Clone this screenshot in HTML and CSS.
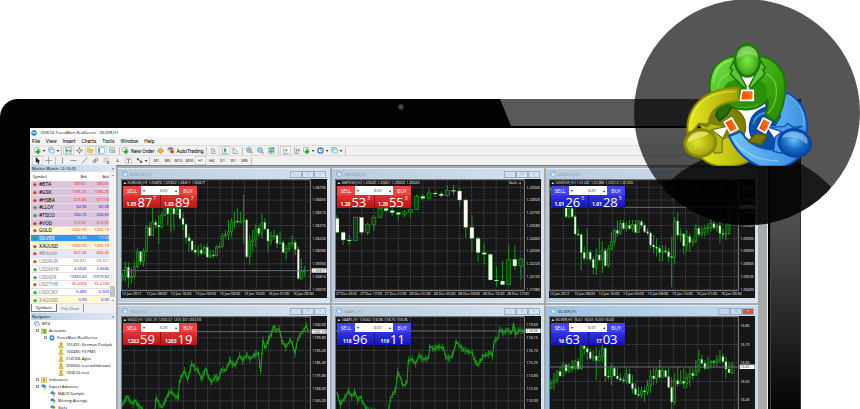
FILE: index.html
```html
<!DOCTYPE html>
<html lang="en">
<head>
<meta charset="utf-8">
<title>MetaTrader 4 terminal</title>
<link rel="stylesheet" href="styles.css">
</head>
<body>
<svg class="defs" aria-hidden="true">
  <symbol id="i-logo" viewBox="0 0 12 12"><circle cx="6" cy="6" r="5.500" fill="#1f86cf"/><path d="M2 7l2-3 2 3 2-3 2 3" fill="none" stroke="#fff" stroke-width="1.500"/></symbol>
  <symbol id="i-plus" viewBox="0 0 12 12"><rect x="1" y="1" width="8" height="8" rx="1" fill="#eef4e8" stroke="#8a9a88"/><path d="M7 4v8M3 8h8" stroke="#18b51e" stroke-width="3"/></symbol>
  <symbol id="i-win" viewBox="0 0 12 12"><rect x="1" y="1" width="8" height="6" rx="1" fill="#cfe6fa" stroke="#5794cc"/><rect x="3" y="4" width="8" height="6" rx="1" fill="#e9f4fd" stroke="#5794cc"/></symbol>
  <symbol id="i-market" viewBox="0 0 12 12"><rect x="1" y="1" width="10" height="10" fill="#d8ecf8" stroke="#79a9cc"/><path d="M2 3l4 3-4 3z" fill="#22a34a"/><path d="M6 7l4-3v6z" fill="#e46330"/></symbol>
  <symbol id="i-cross" viewBox="0 0 12 12"><circle cx="6" cy="6" r="3" fill="none" stroke="#666"/><path d="M6 0v4M6 8v4M0 6h4M8 6h4" stroke="#666"/></symbol>
  <symbol id="i-folder" viewBox="0 0 12 12"><path d="M1 2h4l1 2h4v5H1z" fill="#f6d453" stroke="#c49a1d"/><path d="M7 5l1 2 3 .3-2 1.700.5 2L7 10l-2 1z" fill="#ffe98b" stroke="#c49a1d" stroke-width=".6"/></symbol>
  <symbol id="i-term" viewBox="0 0 12 12"><rect x="1" y="1" width="10" height="10" rx="1" fill="#fff" stroke="#4d8fd0"/><path d="M2 2v8" stroke="#4d8fd0" stroke-width="3"/></symbol>
  <symbol id="i-test" viewBox="0 0 12 12"><rect x="1" y="1" width="8" height="8" fill="#dfe9f1" stroke="#8aa4b8"/><path d="M3 7V4M5 7V3M7 7V5" stroke="#5b8dba"/><circle cx="8" cy="8" r="2" fill="#ffdf70" stroke="#7f8790"/></symbol>
  <symbol id="i-diamond" viewBox="0 0 12 12"><path d="M1 6l5-4 5 4-5 4z" fill="#f4bd35" stroke="#b07612"/><path d="M1 7l5 4 5-4" fill="none" stroke="#b07612"/></symbol>
  <symbol id="i-auto" viewBox="0 0 12 12"><path d="M1 4c2-4 8-4 10 0z" fill="#4c9de0" stroke="#2c6db0"/><path d="M3 5h6l-1 5H4z" fill="#f2ca58"/><circle cx="9" cy="8" r="3" fill="#e53922"/></symbol>
  <symbol id="i-bars" viewBox="0 0 12 12"><path d="M3 1v10h7M7 3v6M5 4h2M7 7h2" fill="none" stroke="#62766a"/></symbol>
  <symbol id="i-candle" viewBox="0 0 12 12"><path d="M2 1v10h9M7 1v9" fill="none" stroke="#62766a"/><path d="M5 3h4v5H5z" fill="#32b146"/></symbol>
  <symbol id="i-line" viewBox="0 0 12 12"><path d="M2 1v10h9" fill="none" stroke="#62766a"/><path d="M3 4c4-2 3 4 7 4" fill="none" stroke="#32b146"/></symbol>
  <symbol id="i-zoom" viewBox="0 0 12 12"><path d="M7 7l4 4" stroke="#d5a92c" stroke-width="3"/><circle cx="5" cy="5" r="4" fill="#d6ecfb" stroke="#468cc8" stroke-width="1.500"/><path d="M3 5h4M5 3v4" stroke="#2b74b8"/></symbol>
  <symbol id="i-zoomout" viewBox="0 0 12 12"><path d="M7 7l4 4" stroke="#d5a92c" stroke-width="3"/><circle cx="5" cy="5" r="4" fill="#d6ecfb" stroke="#468cc8" stroke-width="1.500"/><path d="M3 5h4" stroke="#2b74b8"/></symbol>
  <symbol id="i-tile" viewBox="0 0 12 12"><path d="M1 1h5v5H1zM6 6h5v5H6z" fill="#58b344"/><path d="M6 1h5v5H6zM1 6h5v5H1z" fill="#3f7fc8"/><path d="M2 4h3M7 4h3M2 9h3M7 9h3" stroke="#fff" stroke-width="1.500"/></symbol>
  <symbol id="i-scroll" viewBox="0 0 12 12"><path d="M3 1v10h8" fill="none" stroke="#62766a"/><path d="M6 3l4 2.500L6 8z" fill="#32b146"/></symbol>
  <symbol id="i-shift" viewBox="0 0 12 12"><path d="M3 1v10h8M6 2v8" fill="none" stroke="#62766a"/><path d="M11 3L7 5.500 11 8z" fill="#d8552f"/></symbol>
  <symbol id="i-clock" viewBox="0 0 12 12"><circle cx="6" cy="6" r="4.500" fill="#fff" stroke="#2c73bd" stroke-width="2"/><path d="M6 3v3l2 1" fill="none" stroke="#444"/></symbol>
  <symbol id="i-arrow" viewBox="0 0 12 12"><path d="M3 0v10l2.500-2L7 12l2-1-1.500-3.500H11z" fill="#222"/></symbol>
  <symbol id="i-plusline" viewBox="0 0 12 12"><path d="M6 0v12M0 6h12" stroke="#777"/></symbol>
  <symbol id="i-vline" viewBox="0 0 12 12"><path d="M6 1v10" stroke="#555"/></symbol>
  <symbol id="i-hline" viewBox="0 0 12 12"><path d="M1 6h10" stroke="#555"/></symbol>
  <symbol id="i-trend" viewBox="0 0 12 12"><path d="M1 11L11 1" stroke="#555"/></symbol>
  <symbol id="i-channel" viewBox="0 0 12 12"><path d="M1 8l8-7M3 11l8-7M3 6v4M6 4v5M9 3v3" stroke="#555"/></symbol>
  <symbol id="i-fibo" viewBox="0 0 12 12"><path d="M1 2h9M1 5h9M1 8h6" stroke="#777" stroke-dasharray="2 1"/><path d="M8 8h3M8 11h3M8 7v5" stroke="#444"/></symbol>
  <symbol id="i-label" viewBox="0 0 12 12"><rect x="1" y="1" width="10" height="10" fill="none" stroke="#888" stroke-dasharray="1 1"/><path d="M3 4h6M6 4v6" stroke="#444"/></symbol>
  <symbol id="i-arrows" viewBox="0 0 12 12"><path d="M1 2l5 1-3 3zM11 10L6 9l3-3z" fill="#333"/><path d="M3 4l6 4" stroke="#333"/></symbol>
  <symbol id="i-user" viewBox="0 0 12 12"><circle cx="6" cy="3" r="2.500" fill="#f6c833" stroke="#a97a0d"/><path d="M2 11c0-7 8-7 8 0z" fill="#f6c833" stroke="#a97a0d"/></symbol>
  <symbol id="i-server" viewBox="0 0 12 12"><path d="M2 2l4-1 4 1v7l-4 2-4-2z" fill="#3e9be5" stroke="#1e6fb6"/><path d="M4 4h4v3H4z" fill="#c7e4fa"/></symbol>
  <symbol id="i-accounts" viewBox="0 0 12 12"><path d="M0 2h5l1 1h5v8H0z" fill="#f1d15c" stroke="#b7951f"/><circle cx="7" cy="4" r="2.500" fill="#51ad38"/><path d="M4 10c0-5 6-5 6 0z" fill="#51ad38"/></symbol>
  <symbol id="i-func" viewBox="0 0 12 12"><rect x="1" y="1" width="10" height="10" fill="#fbe280" stroke="#c4a546"/><path d="M8 3c-3-1-2 3-3 7M4 6h4" fill="none" stroke="#6b5a1a"/></symbol>
  <symbol id="i-hat" viewBox="0 0 12 12"><path d="M1 5C1 0 8 0 9 4l2 2-5 1z" fill="#3e95d8" stroke="#246ca6" stroke-width=".6"/><path d="M5 7l5-1v3l-3 3z" fill="#edbe42"/></symbol>
</svg>

<main class="stage">
  <section class="laptop">
    <div class="bezel-top"><span class="camera"></span><span class="glare"></span></div>
    <div class="bezel-left"></div>
    <div class="screen">
      <header class="titlebar"><svg class="ico"><use href="#i-logo"/></svg><span>160674: ForexMart-RealServer - SILVER,H1</span></header>
      <nav class="menu">
        <button>File</button><button>View</button><button>Insert</button><button>Charts</button><button>Tools</button><button>Window</button><button>Help</button>
      </nav>
      <div class="toolbar main-tools" id="tools"></div>
      <div class="toolbar line-tools" id="lines"></div>
      <div class="body">
        <aside class="side">
          <h2>Market Watch: 12:15:20<span>×</span></h2>
          <div class="watch">
            <table>
              <thead><tr><th>Symbol</th><th>Bid</th><th>Ask</th></tr></thead>
              <tbody id="quotes"></tbody>
            </table>
            <div class="scroll"><span>⌃</span><i></i><span>⌄</span></div>
          </div>
          <div class="tabs"><button class="on">Symbols</button><button>Tick Chart</button></div>
          <h2>Navigator<span>×</span></h2>
          <ul class="tree" id="tree"></ul>
        </aside>
        <div class="workspace" id="charts"></div>
      </div>
    </div>
    <div class="bezel-right"></div>
  </section>

  <svg class="badge" viewBox="12 0 678 676" role="img" aria-label="MetaTrader 4">
    <defs>
      <clipPath id="disc"><circle cx="351" cy="337" r="339"/></clipPath>
      <clipPath id="flat"><path d="M100 100h500v397H100z"/></clipPath>
      <radialGradient id="gh" cx=".5" cy=".5" r=".55"><stop offset="0" stop-color="#7fee45"/><stop offset="1" stop-color="#329713"/></radialGradient>
      <linearGradient id="gb" x2="1" y2=".7"><stop offset="0" stop-color="#7be44e"/><stop offset=".5" stop-color="#45b81b"/><stop offset="1" stop-color="#2f9200"/></linearGradient>
      <radialGradient id="yh" cx=".4" cy=".45" r=".6"><stop offset="0" stop-color="#e4e42c"/><stop offset="1" stop-color="#9a9b06"/></radialGradient>
      <linearGradient id="yb"><stop offset="0" stop-color="#e8ea20"/><stop offset="1" stop-color="#a3a405"/></linearGradient>
      <radialGradient id="bh" cx=".45" cy=".4" r=".6"><stop offset="0" stop-color="#6cc2fb"/><stop offset=".6" stop-color="#1467bd"/><stop offset="1" stop-color="#0a4aa5"/></radialGradient>
      <linearGradient id="bb"><stop offset="0" stop-color="#70c4fa"/><stop offset="1" stop-color="#3a8fe0"/></linearGradient>
      <linearGradient id="card" x2="1"><stop offset="0" stop-color="#ff3d00"/><stop offset="1" stop-color="#ff7d2e"/></linearGradient>
    </defs>
    <circle cx="351" cy="337" r="339" fill="#000" fill-opacity=".665"/>
    <circle cx="352" cy="791" r="340" fill="#000" fill-opacity=".69" clip-path="url(#disc)"/>
    <g clip-path="url(#flat)" stroke-width="6" stroke-linejoin="round">
      <path d="M296 310L405 310 430 400 355 430 285 390z" fill="#fff"/>
      <circle cx="286" cy="380" r="60" fill="#7e8104" stroke="#737500"/>
      <path d="M205 462C240 512 325 510 382 468L340 422 310 402 250 430z" fill="url(#yb)" stroke="#8c8e00"/>
      <circle cx="420" cy="383" r="61" fill="#0d4fa4" stroke="#0648b2"/>
      <path d="M370 372C374 352 390 340 410 337" fill="none" stroke="#5ab1f2" stroke-width="6" opacity=".7"/>
      <path d="M380 263L420 266C490 272 532 315 532 385L524 415 430 385 450 350 440 320 388 302z" fill="url(#bb)" stroke="#0951bd"/>
      <path d="M474 284C512 308 523 340 522 378" fill="none" stroke="#a5daff" stroke-width="3" opacity=".6"/>
      <path d="M258 346L278 298 309 315 290 345 269 362z" fill="#276e0a" stroke="#165200"/>
      <path d="M239 272C236 208 265 173 318 168L388 168C441 175 468 218 466 265 465 304 457 332 438 364L406 345C414 325 416 311 412 298 385 337 318 337 286 306L262 330z" fill="url(#gb)" stroke="#1e7605"/>
      <path d="M286 305C318 326 370 326 411 297L411 264C405 248 390 240 375 238L330 238C304 240 286 248 282 264z" fill="#2b9208"/>
      <path d="M264 263C268 234 291 218 313 219M391 218C429 222 444 249 438 291 434 317 425 331 413 340" fill="none" stroke="#8ce876" stroke-width="4" opacity=".6"/>
      <path d="M250 248C253 209 275 187 302 181" fill="none" stroke="#a6f284" stroke-width="4" opacity=".7"/>
      <path d="M319 220L388 220 354 270z" fill="#fff" stroke="none"/>
      <path d="M312 182L300 205 308 208 301 222 343 264 349 260 322 210zM392 182L407 205 398 208 405 222 364 264 357 260 383 210z" fill="#5ac839" stroke="#1e6d09" stroke-width="4"/>
      <path d="M173 400C165 325 222 262 325 263L325 302C273 307 240 324 235 372L207 371 191 391z" fill="url(#yb)" stroke="#898a00"/>
      <path d="M185 362C190 310 235 276 315 275" fill="none" stroke="#f7f760" stroke-width="4" opacity=".5"/>
      <path d="M244 378L294 379 270 428z" fill="#fff"/>
      <path d="M208 371L230 380 240 370 288 380 244 389 277 414 276 457 255 460 235 430z" fill="#b8b917" stroke="#787900" stroke-width="4"/>
      <path d="M297 408L333 395C360 438 402 454 455 448L507 470C480 503 430 512 383 496 344 479 318 454 297 408z" fill="url(#bb)" stroke="#0951bd"/>
      <path d="M309 417C335 454 380 482 445 483" fill="none" stroke="#a2dafd" stroke-width="4" opacity=".6"/>
      <path d="M355 425L378 400 411 406 394 434z" fill="#777900" stroke="#585a00" stroke-width="5"/>
      <path d="M410 380L463 378 445 430z" fill="#fff"/>
      <path d="M416 382L465 379 472 370 490 382 515 379 470 400 456 460 430 454 436 411 455 395z" fill="#4b9ee5" stroke="#0b50b0" stroke-width="4"/>
      <ellipse cx="352" cy="181" rx="37" ry="48" fill="url(#gh)" stroke="#1f7808" stroke-width="8"/>
      <path d="M319 177C320 147 338 138 354 139 372 141 385 156 384 173 365 158 344 160 319 177z" fill="#baf4a0" opacity=".45"/>
      <ellipse cx="211" cy="429" rx="47" ry="40" fill="url(#yh)" stroke="#878900" stroke-width="8" transform="rotate(-12 211 429)"/>
      <path d="M173 428C174 403 206 391 230 397 248 406 205 411 173 428z" fill="#fafa9c" opacity=".6"/>
      <ellipse cx="494" cy="429" rx="48" ry="40" fill="url(#bh)" stroke="#0745ab" stroke-width="8" transform="rotate(14 494 429)"/>
      <path d="M456 415C462 393 492 388 519 402 536 415 535 429 529 432 505 410 482 407 456 415z" fill="#b5e3ff" opacity=".5"/>
      <path d="M336 271H370V301H331z" fill="url(#card)" stroke="#fff" stroke-width="5"/>
      <path d="M283 367L305 354 324 386 301 399z" fill="url(#card)" stroke="#fff" stroke-width="5"/>
      <path d="M400 354L423 366 406 399 384 386z" fill="url(#card)" stroke="#fff" stroke-width="5"/>
    </g>
  </svg>
</main>
<script src="app.js"></script>
</body>
</html>
```
FILE: styles.css
```css
* { box-sizing: border-box; }
body { margin: 0; background: #fff; font-family: "Open Sans", "Noto Sans", sans-serif; font-size: 4px; color: #000; }
button, input { font: inherit; color: inherit; margin: 0; padding: 0; border: 0; background: none; }
.defs { display: none; }
.stage { position: relative; height: 100vh; overflow: hidden; padding: 99px 59px 0 0; }
.laptop { display: grid; grid-template-columns: 30px minmax(0, 1fr) 33px; grid-template-rows: 29px auto; background: #020202; border-radius: 18px 0 0 0; overflow: hidden; }
.bezel-top { grid-column: 1 / -1; position: relative; display: flex; padding-bottom: 2px; }
.camera { position: absolute; left: 50%; top: 5px; width: 6px; height: 6px; margin-left: -3px; border-radius: 50%; background: radial-gradient(#55556a, #17171c); }
.glare { width: 301px; margin-left: auto; background: #595959; clip-path: polygon(0 0, 100% 0, 100% 100%, 11px 100%); }
.bezel-right { margin-left: 2px; border-left: 1px solid #444; border-right: 1px solid #333; background: linear-gradient(#585858, #4d4d4d 100px, #030303 285px); }
.screen { background: #f0f0f0; min-width: 0; }
.ico { width: 6px; height: 6px; flex: none; display: block; }

.titlebar { display: flex; align-items: center; gap: 3px; height: 9px; padding-left: 1px; background: #fff; }
.menu { display: flex; gap: 6px; height: 8px; padding-left: 2px; align-items: center; background: #f6f6f6; font-family: Roboto, sans-serif; font-size: 5px; line-height: 6px; }
.toolbar { display: flex; align-items: center; height: 10px; border-top: 1px solid #dcdcdc; font-family: Roboto, sans-serif; font-size: 5px; line-height: 6px; padding-left: 2px; }
.toolbar button { display: flex; align-items: center; justify-content: center; gap: 2px; width: 11px; height: 9px; flex: none; }
.toolbar button.wide { width: 14px; }
.toolbar button.text { width: auto; padding: 0 1px; }
.toolbar button.on { background: #fafafa; box-shadow: inset 0 0 0 1px #d4d4d4; }
.toolbar .ico { width: 7px; height: 7px; }
.toolbar .caret::after { content: "▾"; font-size: 4px; }
.toolbar hr { width: 1px; height: 8px; margin: 0 1px; border: 0; background: #c2c2c2; flex: none; }
.line-tools .tf { font-size: 4px; color: #333; }

.body { display: grid; grid-template-columns: 86px minmax(0, 1fr); }
.side { background: #f0f0f0; min-width: 0; padding-left: 1px; overflow: hidden; }
.side h2 { display: flex; justify-content: space-between; height: 7px; margin: 0; padding: 0 2px 0 1px; font-size: 4px; line-height: 7px; font-weight: 400; background: linear-gradient(90deg, #b9cde0, #dde8f3); }
.watch { display: flex; background: #fff; }
.watch table { width: 78px; height: 132px; border-collapse: collapse; table-layout: fixed; line-height: 6px; }
.watch th { font-weight: 400; height: 9px; padding: 0; text-align: right; background: #fff; }
.watch th:first-child { text-align: left; padding-left: 2px; width: 33px; }
.watch td { padding: 0; text-align: right; border-bottom: 1px solid #e6e0e6; color: #1010e8; }
.watch td:first-child { color: #000; text-align: left; white-space: nowrap; overflow: hidden; font-family: Roboto, sans-serif; font-size: 5px; }
.watch td:first-child::before { content: "◆"; color: #21a73a; padding: 0 2px; }
.watch .down td { color: #f81414; }
.watch .down td:first-child { color: #000; }
.watch .down td:first-child::before { color: #d83f18; }
.watch .pink { background: #dcc4dc; }
.watch .cream { background: #fff9d4; }
.watch .lilac { background: #e7e5f8; }
.watch tr.sel { background: #3095f3; }
.watch tr.sel td, .watch tr.sel td:first-child { color: #fff; }
.watch tr.dim td:first-child { color: #8c8c8c; }
.scroll { display: flex; flex-direction: column; align-items: center; flex: 1; padding: 2px 0; background: #f2f2f2; }
.scroll i { width: 5px; height: 11px; margin-top: auto; background: #c4c4c4; }
.tabs { display: flex; height: 9px; align-items: start; }
.tabs button { padding: 0 4px; height: 8px; line-height: 7px; border-right: 1px solid #999; color: #555; }
.tabs .on { background: #fff; color: #000; border: 1px solid #777; border-top: 0; }
.tree { list-style: none; margin: 0; padding: 0; background: #fff; }
.tree li { display: flex; align-items: center; gap: 2px; height: 7px; line-height: 7px; white-space: nowrap; padding-left: 3px; }
.tree .d1 { padding-left: 5px; }
.tree .d2 { padding-left: 13px; }
.tree .d3 { padding-left: 27px; }
.tree .leaf { padding-left: 19px; }
.tree b { width: 3px; height: 3px; border: 1px solid #999; }

.workspace { display: grid; grid-template-columns: repeat(3, minmax(0, 1fr)); gap: 2px; align-content: start; padding: 2px 9px 0 2px; background: #a9a9a9; border-top: 1px solid #808080; border-right: 1px solid #eee; }
.win { position: relative; padding: 0 3px 4px; background: linear-gradient(90deg, #b9cbdd, #d6e3f0); border: 1px solid #e3edf6; border-width: 1px 0; }
.win > header { display: flex; align-items: center; gap: 2px; height: 10px; padding: 0 1px; color: #8493a2; }
.win > header span { flex: 1; }
.win nav { display: flex; height: 7px; }
.win nav button { width: 12px; border: 1px solid #a0aebd; font-size: 4px; line-height: 4px; color: #8796a6; }
.win.active { background: linear-gradient(90deg, #9fc3e4, #c5dcf0); }
.win.active > header { color: #222; }
.win.active nav button:last-child { background: #d25740; color: #fff; }
.plot { position: relative; }
.plot > svg { display: block; width: 100%; height: auto; background: #161616; font-family: "Open Sans", sans-serif; font-size: 11px; }
.plot text { fill: #f4f4f4; }
.trade { position: absolute; left: 2px; top: 7px; width: 74px; display: grid; grid-template-columns: 18px 1fr 18px; background: #fff; color: #fff; }
.trade > button { height: 9px; font-size: 5px; line-height: 8px; background: #ee4444; }
.trade label { display: flex; align-items: center; justify-content: space-between; margin: 1px; padding: 0 1px; color: #333; font-size: 4px; line-height: 6px; }
.trade input { width: 16px; height: 6px; text-align: right; color: #111; }
.quote { grid-column: 1 / -1; display: grid; grid-template-columns: 1fr 1fr; gap: 1px; background: #811; }
.quote button { height: 13px; display: flex; align-items: center; justify-content: center; gap: 1px; background: linear-gradient(#e03434, #b81616); line-height: 12px; white-space: nowrap; }
.quote small { font-size: 5px; font-weight: 700; line-height: 6px; align-self: end; padding-bottom: 1px; }
.quote strong { font-size: 13px; font-weight: 400; }
.quote sup { font-size: 5px; line-height: 6px; align-self: start; }
.blue .trade > button { background: #4444ee; }
.blue .quote { background: #118; }
.blue .quote button { background: linear-gradient(#3434e0, #1414b4); }

.badge { position: absolute; top: 0; right: 0; width: 226px; height: auto; }
```
FILE: app.js
```js
const el = id => document.getElementById(id);
const icon = name => `<svg class="ico"><use href="#i-${name}"/></svg>`;

// Toolbars: "|" is a separator, "!" marks a pressed button, "+" a drop-down.
function toolbar(list) {
  return list.map(item => {
    if (item === '|') return '<hr>';
    const on = item.includes('!') ? 'on ' : '';
    const wide = item.includes('+') ? 'wide caret ' : '';
    const [name, label] = item.replace(/[!+]/g, '').split(':');
    if (!name) return `<button class="tf ${on}">${label}</button>`;
    return `<button class="${on}${wide}${label ? 'text' : ''}">${icon(name)}${label || ''}</button>`;
  }).join('');
}
el('tools').innerHTML = toolbar(['plus+', 'win+', '|', 'market!', 'cross', 'folder!', 'term!', 'test', '|', 'plus:New Order', 'diamond', 'auto:AutoTrading', '|', 'bars', 'candle!', 'line', '|', 'zoom', 'zoomout', 'tile', '|', 'scroll!', 'shift', 'plus+', 'clock+', 'win+', '|']);
el('lines').innerHTML = toolbar(['arrow!', 'plusline', '|', 'vline', 'hline', 'trend', 'channel', 'fibo', ':A', 'label', 'arrows+', '|', ':M1', ':M5', ':M15', ':M30', '!:H1', ':H4', ':D1', ':W1', ':MN', '|']);

const quotes = [
  ['#BTA', '389.61', '389.81', 'down pink'], ['#GSK', '1595.25', '1596.25', 'down pink'],
  ['#HSBA', '676.83', '677.03', 'down pink'], ['#LLOY', '64.96', '65.06', 'pink'],
  ['#TSCO', '204.25', '204.65', 'pink'], ['#VOD', '212.81', '213.01', 'down pink'],
  ['GOLD', '1202.59', '1203.19', 'down cream'], ['SILVER', '16.63', '17.03', 'sel'],
  ['XAUUSD', '1202.59', '1203.19', 'down cream'], ['#Bitcoin', '827.46', '834.46', 'down lilac dim'],
  ['USDRUR', '59.321', '59.721', 'down dim'], ['USDMYR', '4.4636', '4.4686', 'dim'],
  ['USDIDR', '13363.82', '13373.82', 'dim'], ['USDTHB', '35.4068', '35.4168', 'down dim'],
  ['USDCNY', '6.889', '6.909', 'dim'], ['XAGUSD', '0.00', '0.00', 'cream dim']
];
el('quotes').innerHTML = quotes.map(q => `<tr class="${q[3]}"><td>${q[0]}</td><td>${q[1]}</td><td>${q[2]}</td></tr>`).join('');

const tree = [
  ['', 'win', 'MT4'], ['d1 x', 'accounts', 'Accounts'], ['d2 x', 'server', 'ForexMart-RealServer'],
  ['d3', 'user', '101491: German Pavlyak'], ['d3', 'user', '104485: FX PM3'], ['d3', 'user', '214168: Agus'],
  ['d3', 'user', '203064: test withdrawal'], ['d3', 'user', '160674: test'], ['d1 x', 'func', 'Indicators'],
  ['d1 x', 'hat', 'Expert Advisors'], ['leaf', 'hat', 'MACD Sample'], ['leaf', 'hat', 'Moving Average'], ['leaf', 'hat', 'Stels']
];
el('tree').innerHTML = tree.map(([c, i, t]) => `<li class="${c}">${c.includes('x') ? '<b></b>' : ''}${icon(i)}${t}</li>`).join('');

// Candles: [close, high, low]; each opens at the previous close.
const eur = [[335,325,346],[307,290,350],[338,293,368],[335,310,355],[305,290,340],[260,250,310],[290,258,300],[258,250,305],[188,180,262],[212,170,215],[172,125,212],[180,165,190],[186,150,237],[150,140,190],[128,120,155],[147,120,180],[130,120,203],[147,125,195],[132,125,150],[160,128,165],[178,145,195],[218,175,235],[228,205,260],[255,222,260],[262,240,268],[255,240,275],[265,235,270],[247,240,268],[276,235,280],[270,255,280],[272,255,280],[245,240,275],[244,235,250],[212,205,250],[208,195,220],[200,165,225],[172,160,215],[168,140,190],[170,130,175],[170,140,175],[165,90,235],[275,160,280],[230,210,300],[225,195,260],[190,175,245],[205,180,215],[172,145,220],[192,160,197],[228,200,262],[212,200,240],[212,195,225],[235,205,250],[233,200,240],[262,225,265],[250,240,285],[235,230,260],[233,210,245],[253,225,270],[340,245,345],[318,280,345],[318,303,335]];
const gbp = [[202,150,205],[225,200,240],[226,210,240],[157,155,228],[202,155,210],[178,172,210],[157,150,197],[130,120,160],[137,130,140],[143,130,152],[148,140,163],[141,135,157],[133,130,158],[94,88,135],[100,85,105],[84,70,103],[87,78,95],[92,80,97],[76,60,95],[78,60,90],[105,70,125],[187,100,218],[220,150,260],[263,215,290],[268,235,298],[345,265,345],[348,305,365],[359,288,360],[283,238,360],[303,240,315],[283,280,343]];
const chf = [[72,68,95],[90,70,100],[80,70,100],[100,80,120],[127,90,130],[155,110,160],[130,110,160],[155,128,160],[207,150,210],[209,190,215],[263,205,317],[280,245,290],[262,190,285],[283,255,290],[308,275,328],[270,250,330],[285,220,290],[257,230,325],[302,250,305],[252,240,308],[230,200,255],[196,190,240],[205,165,215],[174,165,210],[190,165,195],[181,170,200],[190,165,195],[178,165,200],[202,165,205],[170,165,205],[181,165,190],[200,175,205],[204,190,210],[240,200,250],[246,210,265],[250,220,275],[262,240,290],[258,240,290],[261,240,265],[275,250,290],[277,215,367],[168,155,295],[210,143,215],[207,190,230],[243,205,267],[215,195,260],[232,205,260],[228,220,245],[190,178,235],[208,180,215],[202,185,215],[190,180,215],[188,175,210],[176,165,200],[188,170,195],[182,175,200],[205,170,235],[207,190,220],[205,175,225],[130,105,210],[122,100,135]];
const slv = [[250,240,268],[240,220,270],[215,210,250],[228,200,230],[195,185,220],[213,190,220],[198,190,220],[205,180,218],[184,180,210],[206,175,210],[138,135,210],[146,130,165],[156,140,180],[175,145,180],[168,150,185],[182,140,240],[170,150,185],[145,130,185],[228,140,245],[231,205,240],[205,190,255],[228,200,230],[236,205,240],[240,220,245],[243,230,250],[222,205,250],[250,205,252],[266,225,280],[283,250,285],[285,260,292],[272,260,295],[276,262,305],[257,240,285],[228,210,280],[236,205,255],[210,205,250],[232,180,235],[212,205,225],[230,210,235],[262,205,265],[306,232,327],[242,220,315],[252,200,260],[244,210,250],[250,205,265],[232,220,265],[220,200,260],[227,205,240],[212,180,222],[178,150,220],[190,165,195],[205,180,210],[188,170,200],[184,180,205],[187,180,200],[180,165,200],[170,150,190],[185,160,190],[207,170,235],[218,185,220],[195,185,222]];
// Bar charts: turning points [x, y] of the price.
const gold = [[20,318],[30,300],[38,290],[46,306],[54,312],[60,300],[70,318],[78,322],[88,340],[118,345],[124,292],[132,312],[140,322],[150,305],[160,280],[170,275],[180,290],[190,292],[193,245],[208,212],[218,240],[230,190],[240,205],[250,212],[260,238],[272,205],[280,230],[290,248],[300,230],[310,238],[320,208],[332,212],[345,180],[352,192],[362,195],[374,165],[382,182],[396,164],[404,178],[418,165],[430,160],[437,215],[444,120],[450,145],[460,120],[470,100],[476,78],[484,92],[492,85],[500,120],[512,142],[526,120],[532,132],[540,160],[548,118],[560,98],[568,88],[574,75],[580,98]];
const aapl = [[18,278],[28,315],[36,300],[44,290],[52,272],[62,290],[72,276],[80,302],[88,290],[98,312],[108,330],[170,345],[180,290],[194,270],[200,215],[208,232],[216,258],[228,248],[232,182],[244,178],[254,192],[264,165],[276,178],[292,175],[297,138],[308,148],[322,140],[338,144],[344,172],[356,175],[366,162],[376,125],[388,140],[398,150],[412,155],[424,158],[428,175],[440,195],[450,180],[456,168],[468,165],[480,158],[484,170],[490,122],[502,115],[506,88],[516,98],[530,90],[542,100],[548,72],[554,105],[564,90],[582,95]];

function candles(data, start, first, step, width) {
  let open = start;
  return data.map(([close, high, low], i) => {
    const x = first + i * step;
    const top = Math.min(open, close);
    const h = Math.max(3, Math.abs(close - open));
    const down = close > open;
    open = close;
    return `<path d="M${x} ${high}V${low}" stroke="#189a18" stroke-width="3"/>` +
      `<rect x="${x - width / 2}" y="${top}" width="${width}" height="${h}" fill="${down ? '#f6fff4' : '#0c420c'}" stroke="#18a018" stroke-width="${down ? 1 : 2}"/>`;
  }).join('');
}
function bars(points) {
  let d = '', n = 0;
  for (let i = 1; i < points.length; i++) {
    const [x0, y0] = points[i - 1], [x1, y1] = points[i];
    for (let x = x0; x < x1; x += 4) {
      const y = y0 + (y1 - y0) * (x - x0) / (x1 - x0);
      const swing = 3 + (n++ * 7 % 11);
      d += `M${x} ${y - swing}V${y + swing}`;
    }
  }
  return `<path d="M${points.join('L')}" fill="none" stroke="#18a818" stroke-width="3"/><path d="${d}" stroke="#18b818" stroke-width="2"/>`;
}

const charts = [
  { name: 'EURUSD,H1', info: '1.05876 1.05932 1.05811 1.05877', ox: 18, oy: 42, gx: 58, gy: 67, dy: 38.25, draw: candles(eur, 345, 22, 9.1, 6),
    prices: ['1.06795', '1.06655', '1.06515', '1.06375', '1.06230', '1.06090', '1.05950', '1.05810', '1.05670'], now: [317, '1.05877'],
    times: ['12 Jan 2017', '12 Jan 08:00', '12 Jan 16:00', '13 Jan 00:00', '13 Jan 08:00', '13 Jan 16:00', '16 Jan 01:00', '16 Jan 09:00'], sell: ['1.05', '87', '7'], buy: ['1.05', '89', '7'] },
  { name: 'GBPUSD,H1', info: '1.20625 1.20631 1.20603 1.20620', note: 'Stels ☺', ox: 12, oy: 42, gx: 55, gy: 67, dy: 38.25, draw: candles(gbp, 160, 18, 18.4, 12),
    prices: ['1.22940', '1.22820', '1.22700', '1.22580', '1.22460', '1.22340', '1.22220', '1.22100', '1.21980'],
    times: ['27 Dec 2016', '27 Dec 17:00', '27 Dec 21:00', '28 Dec 01:00', '28 Dec 05:00', '28 Dec 09:00', '28 Dec 13:00', '28 Dec 17:00'], sell: ['1.20', '53', '3'], buy: ['1.20', '55', '3'] },
  { name: 'USDCHF,H1', info: '1.01247 1.01285 1.01212 1.01265', blue: 1, ox: 12, oy: 42, gx: 55, gy: 67, dy: 38.25, draw: candles(chf, 70, 18, 9.05, 6),
    prices: ['1.01470', '1.01335', '1.01200', '1.01065', '1.00935', '1.00800', '1.00665', '1.00535', '1.00400'], now: [127, '1.01265'],
    times: ['12 Jan 2017', '12 Jan 08:00', '12 Jan 16:00', '13 Jan 00:00', '13 Jan 08:00', '13 Jan 16:00', '16 Jan 01:00', '16 Jan 09:00'], sell: ['1.01', '26', '5'], buy: ['1.01', '28', '5'] },
  { name: 'GOLD,H1', info: '1201.91 1203.31 1201.33 1202.59', ox: 18, oy: 48, gx: 58, gy: 75, dy: 38, draw: bars(gold),
    prices: ['1204.60', '1199.80', '1195.20', '1185.40', '1175.80', '1168.00', '1160.20'], now: [95, '1202.59'], times: [], sell: ['1202', '59', ''], buy: ['1203', '19', ''] },
  { name: '#AAPL,H1', info: '118.82 118.96 118.75 118.96', blue: 1, ox: 12, oy: 48, gx: 55, gy: 75, dy: 38, draw: bars(aapl),
    prices: ['119.60', '118.15', '116.70', '115.25', '113.80', '112.35', '110.90'], now: [93, '118.96'], times: [], sell: ['118', '96', ''], buy: ['119', '11', ''] },
  { name: 'SILVER,H1', info: '16.61 16.65 16.59 16.63', blue: 1, active: 1, ox: 12, oy: 48, gx: 55, gy: 78, dy: 55.5, draw: candles(slv, 265, 18, 9.05, 6),
    prices: ['16.85', '16.75', '16.65', '16.55', '16.45'], now: [201, '16.63'], times: [], sell: ['16', '63', ''], buy: ['17', '03', ''] }
];

const price = q => `<button><small>${q[0]}</small><strong>${q[1]}</strong>${q[2] ? `<sup>${q[2]}</sup>` : ''}</button>`;
el('charts').innerHTML = charts.map((c, n) => {
  const { ox, oy } = c, right = ox + 568, bottom = oy + 335;
  let grid = '';
  for (let x = c.gx; x < right; x += 36.7) grid += `M${x} ${oy + 2}V${bottom}`;
  let labels = '';
  c.prices.forEach((p, i) => {
    const y = c.gy + i * c.dy;
    grid += `M${ox} ${y}H${right}`;
    labels += `<text x="${right + 6}" y="${y + 4}">${p}</text>`;
  });
  c.times.forEach((t, i) => { labels += `<text x="${ox + 2 + i * 73.4}" y="${bottom + 14}">${t}</text>`; });
  const now = c.now ? `<path d="M${ox} ${c.now[0]}H${right}" stroke="#66707a" stroke-width="3"/><rect x="${right + 4}" y="${c.now[0] - 7}" width="45" height="13" fill="#fff"/><text x="${right + 6}" y="${c.now[0] + 4}" style="fill:#222">${c.now[1]}</text>` : '';
  const note = c.note ? `<text x="${right - 46}" y="${oy + 15}">${c.note}</text>` : '';
  return `<section class="win${c.blue ? ' blue' : ''}${c.active ? ' active' : ''}">
    <header>${icon('win')}<span>${c.name}</span><nav><button>–</button><button>□</button><button>×</button></nav></header>
    <div class="plot">
      <svg viewBox="${ox} ${oy} 618 357"><path d="${grid}" stroke="#646d78" stroke-width="2" stroke-dasharray="4 4" fill="none"/>${c.draw}
      <path d="M${ox + 1} ${bottom}V${oy + 2}H${right}V${bottom}H${ox}" fill="none" stroke="#8a8a8a" stroke-width="3"/>
      <text x="${ox + 6}" y="${oy + 14}">▲ ${c.name} ${c.info}</text>${labels}${now}${note}</svg>
      <div class="trade"><button>SELL</button><label for="lot${n}">▾<input id="lot${n}" value="0.01">▴</label><button>BUY</button><div class="quote">${price(c.sell)}${price(c.buy)}</div></div>
    </div></section>`;
}).join('');
```
